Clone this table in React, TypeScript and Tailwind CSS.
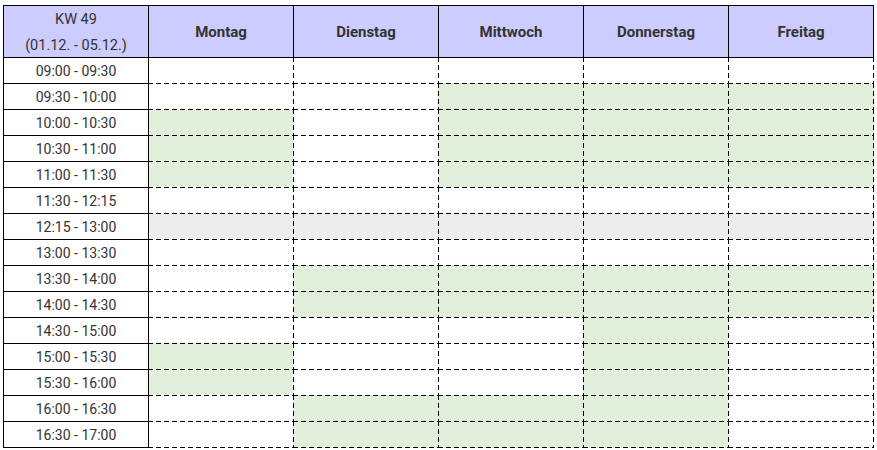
import { Fragment } from "react";

const days = ["Montag", "Dienstag", "Mittwoch", "Donnerstag", "Freitag"];

// g = frei (grün), x = Pause (grau), . = leer
const rows: { time: string; cells: string }[] = [
  { time: "09:00 - 09:30", cells: "....." },
  { time: "09:30 - 10:00", cells: "..ggg" },
  { time: "10:00 - 10:30", cells: "g.ggg" },
  { time: "10:30 - 11:00", cells: "g.ggg" },
  { time: "11:00 - 11:30", cells: "g.ggg" },
  { time: "11:30 - 12:15", cells: "....." },
  { time: "12:15 - 13:00", cells: "xxxxx" },
  { time: "13:00 - 13:30", cells: "....." },
  { time: "13:30 - 14:00", cells: ".gggg" },
  { time: "14:00 - 14:30", cells: ".gggg" },
  { time: "14:30 - 15:00", cells: "...g." },
  { time: "15:00 - 15:30", cells: "g..g." },
  { time: "15:30 - 16:00", cells: "g..g." },
  { time: "16:00 - 16:30", cells: ".ggg." },
  { time: "16:30 - 17:00", cells: ".ggg." },
];

// dashed lines drawn as background layers (longer dashes than border-dashed)
const dash = {
  tl: "[background-image:repeating-linear-gradient(90deg,#000_0_5px,transparent_5px_8px),repeating-linear-gradient(180deg,#000_0_5px,transparent_5px_8px)] [background-size:100%_1px,1px_100%] [background-position:0_0,0_0]",
  tlr: "[background-image:repeating-linear-gradient(90deg,#000_0_5px,transparent_5px_8px),repeating-linear-gradient(180deg,#000_0_5px,transparent_5px_8px),repeating-linear-gradient(180deg,#000_0_5px,transparent_5px_8px)] [background-size:100%_1px,1px_100%,1px_100%] [background-position:0_0,0_0,100%_0]",
  tlb: "[background-image:repeating-linear-gradient(90deg,#000_0_5px,transparent_5px_8px),repeating-linear-gradient(180deg,#000_0_5px,transparent_5px_8px),repeating-linear-gradient(90deg,#000_0_5px,transparent_5px_8px)] [background-size:100%_1px,1px_100%,100%_1px] [background-position:0_0,0_0,0_100%]",
  tlrb: "[background-image:repeating-linear-gradient(90deg,#000_0_5px,transparent_5px_8px),repeating-linear-gradient(180deg,#000_0_5px,transparent_5px_8px),repeating-linear-gradient(180deg,#000_0_5px,transparent_5px_8px),repeating-linear-gradient(90deg,#000_0_5px,transparent_5px_8px)] [background-size:100%_1px,1px_100%,1px_100%,100%_1px] [background-position:0_0,0_0,100%_0,0_100%]",
};

function cellBg(c: string) {
  if (c === "g") return "bg-[#e2efda]";
  if (c === "x") return "bg-[#ededed]";
  return "bg-white";
}

export default function App() {
  const last = rows.length - 1;
  return (
    <div className="min-h-screen bg-white pt-[5px] pl-[3px] font-['Roboto',sans-serif] text-[14px] text-[#333]">
      <div className="grid w-[871px] grid-cols-[145px_145px_145px_145px_145px_146px] grid-rows-[52px_repeat(14,26px)_27px]">
        <div className="flex flex-col items-center justify-center pt-[2px] border-t border-l border-black bg-[#ccccff] leading-[26px] text-[14.5px]">
          <span>KW 49</span>
          <span>(01.12. - 05.12.)</span>
        </div>
        {days.map((d, i) => (
          <div
            key={d}
            className={`flex items-center justify-center pt-[2px] border-t border-l border-black bg-[#ccccff] text-[15px] font-bold ${
              i === days.length - 1 ? "border-r" : ""
            }`}
          >
            {d}
          </div>
        ))}

        {rows.map((r, ri) => (
          <Fragment key={r.time}>
            <div
              className={`flex items-center justify-center pt-[2px] border-t border-l border-black bg-white ${
                ri === last ? "border-b" : ""
              }`}
            >
              {r.time}
            </div>
            {r.cells.split("").map((c, ci) => {
              const isR = ci === 4;
              const isB = ri === last;
              const d = isR && isB ? dash.tlrb : isR ? dash.tlr : isB ? dash.tlb : dash.tl;
              return (
                <div
                  key={ci}
                  className={`bg-no-repeat [background-origin:border-box] border-black ${d} ${cellBg(c)} ${
                    ri === 0 ? "border-t" : ""
                  } ${ci === 0 ? "border-l" : ""}`}
                />
              );
            })}
          </Fragment>
        ))}
      </div>
    </div>
  );
}
